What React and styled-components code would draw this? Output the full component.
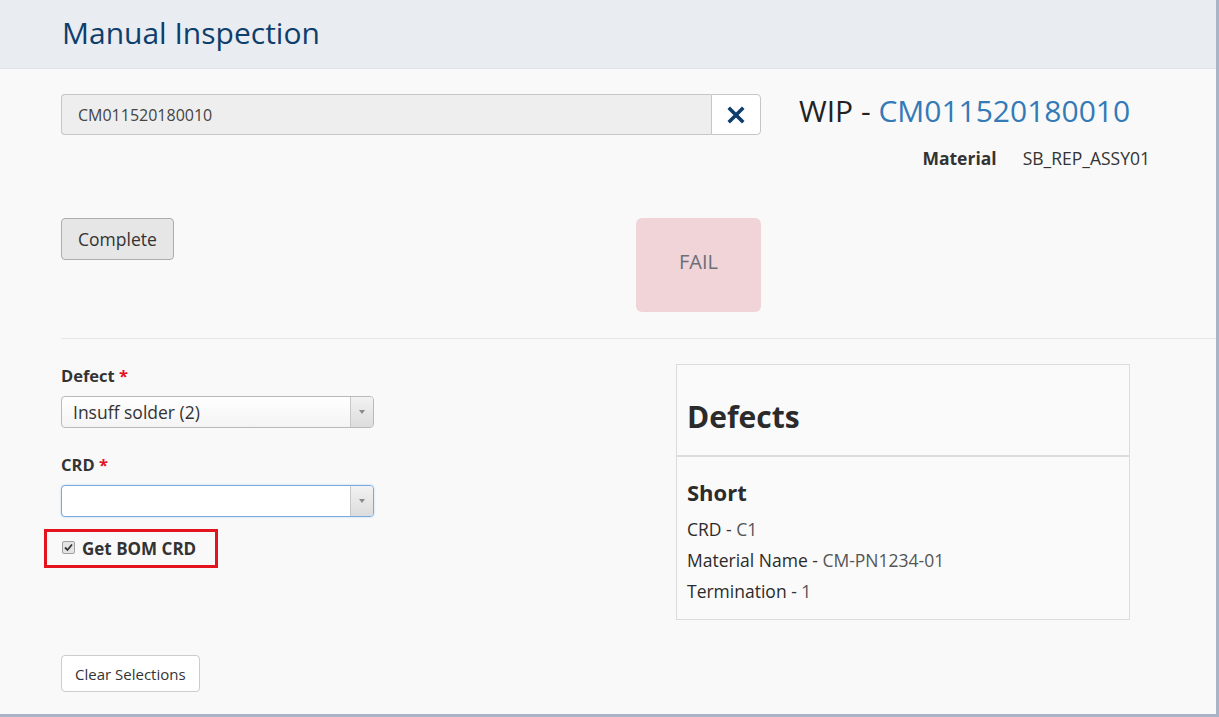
import React from "react";
import styled, { createGlobalStyle } from "styled-components";

const GlobalStyle = createGlobalStyle`
  html, body {
    margin: 0;
    padding: 0;
    background: #f9f9f9;
  }
  body {
    font-family: "Open Sans", "Liberation Sans", sans-serif;
    color: #333;
  }
  * {
    box-sizing: border-box;
  }
`;

const Page = styled.div`
  height: 717px;
  background: #f9f9f9;
  border-right: 3px solid #a9b4c6;
  border-bottom: 3px solid #a9b4c6;
  overflow: hidden;
`;

const Header = styled.header`
  height: 69px;
  background: #e9ecf1;
  border-bottom: 1px solid #dfe3e8;
  display: flex;
  align-items: center;
  padding-left: 62px;
`;

const Title = styled.h1`
  margin: 0;
  font-size: 30px;
  font-weight: 400;
  color: #0d3e6c;
  line-height: 1;
  padding-bottom: 2px;
`;

const Main = styled.main`
  padding: 25px 0 0 61px;
`;

const TopRow = styled.div`
  display: flex;
  gap: 38px;
`;

const LeftCol = styled.div`
  width: 700px;
  display: flex;
  flex-direction: column;
`;

const InputGroup = styled.div`
  display: flex;
  height: 41px;
`;

const ScanInput = styled.div`
  flex: 1;
  background: #eeeeee;
  border: 1px solid #c6c6c6;
  border-right: none;
  border-radius: 4px 0 0 4px;
  display: flex;
  align-items: center;
  padding-left: 16px;
  font-size: 16px;
  color: #444;
`;

const ClearButton = styled.button`
  width: 50px;
  background: #fff;
  border: 1px solid #c6c6c6;
  border-radius: 0 4px 4px 0;
  display: flex;
  align-items: center;
  justify-content: center;
  padding: 0;
`;

const ActionRow = styled.div`
  display: flex;
  justify-content: space-between;
  align-items: flex-start;
  margin-top: 83px;
`;

const Button = styled.button`
  font-family: inherit;
  font-size: ${(p) => (p.$small ? "15px" : "17.5px")};
  color: #333;
  background: ${(p) => (p.$light ? "#fff" : "#e6e6e6")};
  border: 1px solid ${(p) => (p.$light ? "#ccc" : "#adadad")};
  border-radius: 4px;
  height: ${(p) => (p.$small ? "37px" : "42px")};
  padding: 0 ${(p) => (p.$small ? "13px" : "16px")};
`;

const FailBox = styled.div`
  width: 125px;
  height: 94px;
  background: #f0d4d7;
  border-radius: 6px;
  display: flex;
  align-items: center;
  justify-content: center;
  padding-bottom: 8px;
  font-size: 20px;
  color: #6a6f78;
`;

const RightCol = styled.div`
  width: 352px;
  display: flex;
  flex-direction: column;
`;

const WipTitle = styled.h2`
  margin: 0;
  font-size: 30px;
  font-weight: 400;
  color: #222;
  line-height: 34px;
  white-space: nowrap;
`;

const WipCode = styled.span`
  color: #337ab7;
`;

const MetaRow = styled.div`
  display: flex;
  justify-content: flex-end;
  gap: 26px;
  margin-top: 18px;
  margin-right: 1px;
  font-size: 17.5px;
  line-height: 24px;
`;

const MetaLabel = styled.span`
  font-weight: 700;
`;

const MetaValue = styled.span`
  color: #333;
`;

const Divider = styled.hr`
  margin: 26px 0 0 0;
  border: none;
  border-top: 1px solid #e6e6e6;
`;

const BottomGrid = styled.div`
  display: grid;
  grid-template-columns: 615px 454px;
  margin-top: 25px;
`;

const Form = styled.div`
  display: flex;
  flex-direction: column;
  width: 313px;
  padding-top: 1px;
`;

const Label = styled.label`
  font-size: 16.5px;
  font-weight: 700;
  line-height: 22px;
  margin-top: ${(p) => p.$mt || 0}px;
  margin-bottom: 9px;
`;

const Required = styled.span`
  color: #e4141e;
`;

const Select = styled.div`
  height: 32px;
  display: flex;
  border: 1px solid ${(p) => (p.$focused ? "#7aa9e0" : "#b9b9b9")};
  border-radius: 4px;
  background: ${(p) =>
    p.$focused ? "#fff" : "linear-gradient(#fff 0%, #f4f4f4 100%)"};
  box-shadow: ${(p) => (p.$focused ? "0 0 2px rgba(102,175,233,0.5)" : "none")};
  overflow: hidden;
`;

const SelectValue = styled.div`
  flex: 1;
  display: flex;
  align-items: center;
  padding-left: 11px;
  font-size: 17.5px;
  color: #333;
`;

const SelectArrow = styled.div`
  width: 23px;
  border-left: 1px solid #c8c8c8;
  background: linear-gradient(#f2f2f2, #dcdcdc);
  display: flex;
  align-items: center;
  justify-content: center;
  &::after {
    content: "";
    border-left: 3.5px solid transparent;
    border-right: 3.5px solid transparent;
    border-top: 4px solid #8a8a8a;
  }
`;

const CheckRow = styled.div`
  display: flex;
  align-items: center;
  gap: 7px;
  margin: 12px 0 0 -17px;
  width: 174px;
  height: 39px;
  border: 3px solid #e4141e;
  padding-left: 15px;
  font-size: 17px;
  font-weight: 700;
`;

const CheckBox = styled.span`
  width: 13px;
  height: 13px;
  border: 1px solid #a0a0a0;
  border-radius: 2px;
  background: #e4e4e4;
  display: flex;
  align-items: center;
  justify-content: center;
  margin-top: -2px;
`;

const Panel = styled.section`
  border: 1px solid #dcdcdc;
  align-self: start;
  background: #fafafa;
`;

const PanelHeader = styled.div`
  padding: 36px 10px 22px;
  border-bottom: 2px solid #dcdcdc;
`;

const PanelTitle = styled.h3`
  margin: 0;
  font-size: 30px;
  font-weight: 700;
  line-height: 32px;
  color: #2b2b2b;
`;

const PanelBody = styled.div`
  padding: 23px 10px 12px;
`;

const DefectName = styled.h4`
  margin: 0 0 10px;
  font-size: 22px;
  font-weight: 700;
  line-height: 24px;
  color: #2b2b2b;
`;

const DetailLine = styled.div`
  font-size: 17.5px;
  line-height: 31px;
  color: #333;
`;

const DetailKey = styled.span`
  font-weight: 500;
  color: #2b2b2b;
`;

const DetailValue = styled.span`
  color: #555;
`;

const Footer = styled.div`
  margin-top: 35px;
`;

const details = [
  ["CRD", "C1"],
  ["Material Name", "CM-PN1234-01"],
  ["Termination", "1"],
];

export default function App() {
  return (
    <>
      <GlobalStyle />
      <Page>
        <Header>
          <Title>Manual Inspection</Title>
        </Header>
        <Main>
          <TopRow>
            <LeftCol>
              <InputGroup>
                <ScanInput>CM011520180010</ScanInput>
                <ClearButton aria-label="clear">
                  <svg width="18" height="18" viewBox="0 0 18 18">
                    <path
                      d="M3 3 L15 15 M15 3 L3 15"
                      stroke="#0d3e6c"
                      strokeWidth="3.6"
                      strokeLinecap="square"
                    />
                  </svg>
                </ClearButton>
              </InputGroup>
              <ActionRow>
                <Button>Complete</Button>
                <FailBox>FAIL</FailBox>
              </ActionRow>
            </LeftCol>
            <RightCol>
              <WipTitle>
                WIP - <WipCode>CM011520180010</WipCode>
              </WipTitle>
              <MetaRow>
                <MetaLabel>Material</MetaLabel>
                <MetaValue>SB_REP_ASSY01</MetaValue>
              </MetaRow>
            </RightCol>
          </TopRow>
          <Divider />
          <BottomGrid>
            <Form>
              <Label>
                Defect <Required>*</Required>
              </Label>
              <Select>
                <SelectValue>Insuff solder (2)</SelectValue>
                <SelectArrow />
              </Select>
              <Label $mt={26}>
                CRD <Required>*</Required>
              </Label>
              <Select $focused>
                <SelectValue />
                <SelectArrow />
              </Select>
              <CheckRow>
                <CheckBox>
                  <svg width="9" height="9" viewBox="0 0 9 9">
                    <path
                      d="M1 4.5 L3.5 7 L8 1.5"
                      stroke="#333"
                      strokeWidth="1.8"
                      fill="none"
                    />
                  </svg>
                </CheckBox>
                Get BOM CRD
              </CheckRow>
            </Form>
            <Panel>
              <PanelHeader>
                <PanelTitle>Defects</PanelTitle>
              </PanelHeader>
              <PanelBody>
                <DefectName>Short</DefectName>
                {details.map(([k, v]) => (
                  <DetailLine key={k}>
                    <DetailKey>{k}</DetailKey> - <DetailValue>{v}</DetailValue>
                  </DetailLine>
                ))}
              </PanelBody>
            </Panel>
          </BottomGrid>
          <Footer>
            <Button $light $small>
              Clear Selections
            </Button>
          </Footer>
        </Main>
      </Page>
    </>
  );
}
